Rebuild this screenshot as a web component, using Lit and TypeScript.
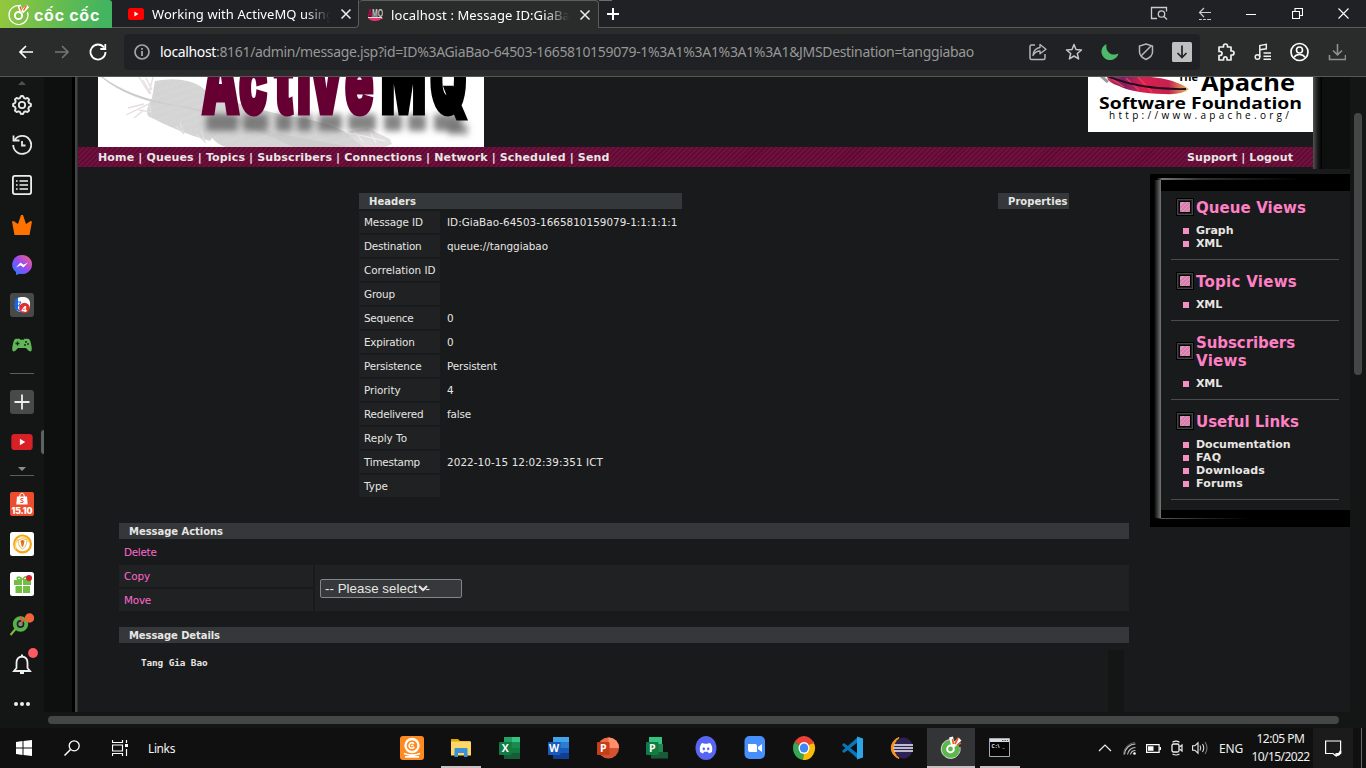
import { LitElement, html, svg, css, nothing } from "lit";
import { customElement, property } from "lit/decorators.js";

/** Inline text spread over a given advance width by adjusting its tracking. */
@customElement("fit-text")
class FitText extends LitElement {
  @property({ type: Number }) w = 0;
  @property() text = "";
  static styles = css`
    :host { display: inline-block; white-space: pre; }
    span { display: inline-block; white-space: pre; }
  `;
  firstUpdated() {
    const s = this.renderRoot.querySelector("span") as HTMLElement;
    const n = s.getBoundingClientRect().width;
    s.style.letterSpacing = `${(this.w - n) / this.text.length}px`;
  }
  render() { return html`<span>${this.text}</span>`; }
}

const fit = (text: string, w: number) => html`<fit-text .text=${text} .w=${w}></fit-text>`;
const ic = (w: number, h: number, body: unknown, vb = `0 0 ${w} ${h}`) =>
  html`<svg width=${w} height=${h} viewBox=${vb} fill="none">${body}</svg>`;

const brandMark = svg`
  <path d="M11 3.500A9.500 9.500 0 1 0 20.500 10" stroke="#fff" stroke-width="1.200"/>
  <circle cx="11.500" cy="13.500" r="3.600" stroke="#fff" stroke-width="2"/>
  <path d="M12 3l2 6M15 10l6-6" stroke="#fff" stroke-width="3.400"/>
  <path d="M13 4.500l1.500 4M16.500 8.500l3-5" stroke="#f2552c" stroke-width="1.400"/>`;
const youtube = (w: number, h: number, c: string) =>
  ic(w, h, svg`<rect width="16" height="12" rx="2.500" fill=${c}/><path d="M6.400 3.600v4.800l4-2.400z" fill="#fff"/>`, "0 0 16 12");
const close = ic(12, 12, svg`<path d="M1.500 1.500l9 9M10.500 1.500l-9 9" stroke="#eee" stroke-width="1.500"/>`);

const windowIcons = [
  ic(18, 16, svg`<path d="M7 12.500H1.500V1.500h15v4" stroke="#ccc" stroke-width="1.300"/><circle cx="11.500" cy="8" r="3.200" stroke="#ccc" stroke-width="1.300"/><path d="M14 10.500l3 3" stroke="#ccc" stroke-width="1.300"/>`),
  ic(14, 14, svg`<path d="M13 5.500H1.500M6 1L1.500 5.500 6 10M1 12.500h12" stroke="#ccc" stroke-width="1.200"/><path d="M4.500 12v1M8.500 12v1" stroke="#202124" stroke-width="1.200"/>`),
  ic(10, 10, svg`<path d="M0 5.500h10" stroke="#fff"/>`),
  ic(11, 11, svg`<path d="M.5 3.500h7v7h-7zM3 3V.5h7.500v7H8" stroke="#fff" stroke-width="1.100"/>`),
  ic(11, 11, svg`<path d="M.5.5l10 10M10.500.5l-10 10" stroke="#fff" stroke-width="1.100"/>`),
];

const addressIcons = [
  ic(18, 18, svg`<path d="M6 2H2.500Q1 2 1 3.500v11Q1 16.500 2.500 16.500h12q1.500 0 1.500-1.500v-4" stroke="#b5b7b6" stroke-width="1.500"/><path d="M11 1.500l6 4.700-6 4.600V8Q6.500 8 4 12.500 4.500 5.500 11 4.500z" stroke="#b5b7b6" stroke-width="1.400" stroke-linejoin="round"/>`),
  ic(18, 18, svg`<path d="M9 1.500l2 5.100 5.500.4-4.200 3.500 1.300 5.400L9 13l-4.600 2.900 1.300-5.400L1.500 7 7 6.600z" stroke="#c4c6c5" stroke-width="1.500" stroke-linejoin="round"/>`),
  ic(18, 18, svg`<path d="M5.500 1C-1 4-1 12 4 15.500c5 3.500 12 1 13.500-5C12 13.500 4 10 5.500 1z" fill="#4db96a"/>`),
  ic(16, 18, svg`<path d="M8 1l6.500 2v6q0 4.500-6.500 7.500Q1.500 13.500 1.500 9V3zM3 13L13 3" stroke="#b5b7b6" stroke-width="1.500"/>`),
  ic(20, 20, svg`<rect width="20" height="20" rx="1.500" fill="#c0c0c0"/><path d="M10 3.500v12M5.500 11l4.500 4.500L14.500 11" stroke="#202124" stroke-width="1.700"/>`),
];

const toolIcons = [
  ic(18, 18, svg`<path d="M2 4h4.500V3a2 2 0 0 1 4 0v1H14v4h1a2 2 0 0 1 0 4h-1v5h-4v-1.500a1.700 1.700 0 0 0-3.400 0V17H2v-4.500h1a2 2 0 0 0 0-4H2z" stroke="#f0f0f0" stroke-width="1.700" stroke-linejoin="round"/>`),
  ic(18, 18, svg`<circle cx="3.500" cy="14" r="2.300" stroke="#eee" stroke-width="1.500"/><path d="M5.800 14V2.500l6.500-1.200v4.500l-6.500 1M9.500 10H17M9.500 13.200H17M9.500 16.200H17" stroke="#eee" stroke-width="1.500"/>`),
  ic(20, 20, svg`<circle cx="9.500" cy="10" r="8.500" stroke="#fff" stroke-width="1.700"/><circle cx="9.500" cy="8" r="3" stroke="#fff" stroke-width="1.600"/><path d="M4 15.500Q5.500 12.500 9.500 12.500t5.500 3" stroke="#fff" stroke-width="1.600"/>`),
  ic(18, 18, svg`<path d="M9.500 1v10.500M5 7.500l4.500 4.300L14 7.500M1.500 12v4.500h16V12" stroke="#8e908f" stroke-width="1.600"/>`),
];

const gear = (() => {
  const p: string[] = [];
  for (let i = 0; i < 48; i++) {
    const a = (i / 48) * Math.PI * 2;
    const r = 8.1 + 1 * Math.max(-0.9, Math.min(0.9, 1.6 * Math.cos(a * 8)));
    p.push(`${(10 + r * Math.cos(a)).toFixed(2)} ${(10 + r * Math.sin(a)).toFixed(2)}`);
  }
  return `M${p.join("L")}z`;
})();

const sideTop = [
  ic(20, 20, svg`<path d=${gear} stroke="#e8e8e8" stroke-width="1.900" stroke-linejoin="round"/><circle cx="10" cy="10" r="3.200" stroke="#e8e8e8" stroke-width="1.800"/>`),
  ic(20, 20, svg`<path d="M3 4.500A9 9 0 1 1 1.200 10M1.500.5v5h6M10 6v4.500h3.500" stroke="#e8e8e8" stroke-width="1.800"/>`),
  ic(20, 20, svg`<rect x=".9" y=".9" width="18.200" height="18.200" rx="2" stroke="#eee" stroke-width="1.800"/><path d="M4 6h1.600M4 10h1.600M4 14h1.600M7.500 6H16M7.500 10H16M7.500 14H16" stroke="#eee" stroke-width="1.600"/>`),
  ic(20, 20, svg`<path d="M0 6.500l1.500-.5L6 9l3-9h2l3 9 4.500-3 1.500.5L17.500 20h-15z" fill="#ff7200"/>`),
  ic(20, 20, svg`<defs><linearGradient id="ms" x1="0" y1="1" x2="1" y2="0"><stop offset="0" stop-color="#1585ff"/><stop offset=".5" stop-color="#9a48f5"/><stop offset="1" stop-color="#ff6470"/></linearGradient></defs><path d="M10 0a10 9.500 0 1 1-2 18.800L4 20v-3A9.500 9.500 0 0 1 10 0z" fill="url(#ms)"/><path d="M4 12.500l4.500-5 3 2.300L16 7.500l-4.500 5-3-2.300z" fill="#fff"/>`),
  ic(24, 24, svg`<rect width="24" height="24" rx="3" fill="#484a49"/><rect x="5" y="4" width="15" height="15" rx="6" fill="#fff"/><path d="M6 5q-3 7 0 12l6 2.500-4-4V5z" fill="#1768e8"/><path d="M8 9h3l-2.500 4H11" stroke="#1768e8"/><circle cx="14.500" cy="15" r="5.300" fill="#df2f2f"/><text x="11.500" y="18.500" font-size="9.500" font-weight="700" fill="#fff">4</text>`),
  ic(20, 14, svg`<path d="M4 .8h3.500l1 1h3l1-1H16q2 0 3 5 1.800 7.500-.5 7.800-1.500 0-4.500-3.600H6Q3 13.600 1.500 13.600-.8 13.300 1 5.800 2 .8 4 .8z" fill="#62b559"/><path d="M3.500 5.500h4M5.500 3.500v4" stroke="#173317" stroke-width="1.300"/><circle cx="14" cy="4" r="1" fill="#173317"/><circle cx="16" cy="6" r="1" fill="#173317"/><circle cx="13" cy="7" r="1" fill="#173317"/>`),
];
const sideBottom = [
  ic(24, 24, svg`<rect width="24" height="24" rx="2" fill="#ee4d2d"/><path d="M7 4.500h10l.7 8H6.300z" fill="#fff"/><path d="M9.500 5Q10 1 12 1t2.500 4" stroke="#fff"/><text x="10" y="11.300" font-size="7" font-weight="700" fill="#ee4d2d">S</text><text x="1.500" y="21.500" font-family="Inter" font-size="8.500" font-weight="900" fill="#fff" textLength="21">15.10</text>`),
  ic(24, 24, svg`<rect width="24" height="24" rx="2.500" fill="#fff"/><circle cx="12.500" cy="12" r="8.400" stroke="#f6a51b" stroke-width="2.200"/><path d="M6 17Q4 12 8 7m2-2q6-1 9 5" stroke="#ffd75a" stroke-width="1.500"/><path d="M8 8q4.500-3 9 0-.5 7-4.500 9Q8.500 15 8 8z" stroke="#e8ba65"/><path d="M11 8.500l1.500 6 1.500-6M12.500 8v3" stroke="#df6f19" stroke-width="1.300"/>`),
  ic(24, 24, svg`<rect width="24" height="24" rx="2.500" fill="#fff"/><path d="M4 8h17v5H4zM5.500 13.500H20v7.500H5.500z" fill="#72bd44"/><path d="M12 8Q6 8 7.500 5.500 10 4 12.500 8 15 3 17.500 6q0 2-5 2" stroke="#72bd44" stroke-width="1.600"/><path d="M12.500 8v13M5 13.500h15" stroke="#fff"/><circle cx="19" cy="6" r="3" fill="#d61f2c"/>`),
  ic(24, 24, svg`<circle cx="10.500" cy="12" r="5.700" stroke="#56b34b" stroke-width="4"/><path d="M5.500 17l-5 6" stroke="#80bf38" stroke-width="2"/><circle cx="10.500" cy="12" r="3" fill="#888" stroke="#222" stroke-width="1.500"/><path d="M10.500 4l1.500 6 5-5" stroke="#e35a30" stroke-width="1.500"/><circle cx="19.500" cy="6" r="4.700" fill="#f0643a"/>`),
  ic(32, 32, svg`<path d="M8 23h16l-2.500-3v-5q0-6-5.500-6.500Q10.500 9 10.500 15v5z" stroke="#eee" stroke-width="1.800"/><path d="M15 7.500h2M14 25h4" stroke="#eee" stroke-width="2"/><circle cx="27" cy="5" r="4.900" fill="#ff5964"/>`),
  ic(16, 4, svg`<circle cx="2" cy="2" r="2" fill="#eee"/><circle cx="8" cy="2" r="2" fill="#eee"/><circle cx="14" cy="2" r="2" fill="#eee"/>`),
];

const office = (l: string, c: string, shape: unknown) =>
  ic(24, 24, svg`${shape}<rect x="1" y="6" width="12.500" height="13" rx="1" fill=${c}/><text x="7.200" y="16.300" text-anchor="middle" font-size="10.500" font-weight="700" fill="#fff">${l}</text>`);
const sheet = (c: string[]) => svg`<path d="M6 1h16v5.500H6z" fill=${c[1]}/><path d="M14 1h8v5.500h-8z" fill=${c[2]}/><path d="M6 6.500h16V12H6z" fill=${c[3]}/><path d="M6 12h16v5.500H6z" fill=${c[0]}/><path d="M6 17h16v6H6z" fill=${c[4]}/>`;
const apps: { icon: unknown; cls?: string }[] = [
  { icon: ic(24, 24, svg`<rect width="24" height="24" rx="3" fill="#ff8b20"/><circle cx="12" cy="9.500" r="6.500" stroke="#fff" stroke-width="2.400"/><path d="M14 7.700A2.800 2.800 0 1 0 14.300 11M11 9.500h2.500" stroke="#fff" stroke-width="1.500"/><path d="M4 17.500q8 3.500 16 0M5 20.800h14" stroke="#fff" stroke-width="1.800"/>`) },
  { cls: "open", icon: ic(24, 24, svg`<path d="M2 3h7l2 2h10v3H2z" fill="#e6a50a"/><path d="M2 5.500h20v14H2z" fill="#ffd766"/><path d="M5.500 21v-8q0-1 1-1h11q1 0 1 1v8h-3.500v-4H9v4z" fill="#3991d8"/>`) },
  { icon: office("X", "#107c41", sheet(["#107c41", "#21a366", "#33c481", "#18894f", "#185c37"])) },
  { icon: office("W", "#185abd", sheet(["#185abd", "#41a5ee", "#41a5ee", "#2b7cd3", "#103f91"])) },
  { icon: office("P", "#c43e1c", svg`<circle cx="12.500" cy="12" r="10.500" fill="#d35230"/><path d="M12.500 1.500A10.500 10.500 0 0 1 23 12H2A10.500 10.500 0 0 1 12.500 1.500z" fill="#ed6c47"/><path d="M12.500 1.500A10.500 10.500 0 0 1 23 12H12.500z" fill="#ff8f6b"/>`) },
  { icon: office("P", "#107c41", svg`<path d="M4 1h13v8H4z" fill="#33c481"/><path d="M8 8h10v8H8z" fill="#21874f"/><path d="M6 16h17v6.500H6z" fill="#185c37"/>`) },
  { icon: ic(24, 24, svg`<ellipse cx="12" cy="12" rx="10.500" ry="12" fill="#5865f2"/><path d="M6 16Q5 10 8 7l3 .8h2l3-.8q3 3 2 9l-3 1.500-1.200-1.700h-3.600L9 17.500z" fill="#fff"/><ellipse cx="9.800" cy="12.700" rx="1.200" ry="1.500" fill="#5865f2"/><ellipse cx="14.200" cy="12.700" rx="1.200" ry="1.500" fill="#5865f2"/>`) },
  { icon: ic(24, 24, svg`<rect x="1.500" y="0" width="20.500" height="23" rx="5" fill="#478ffc"/><path d="M5 8h7q2 0 2 2v6H7q-2 0-2-2zM15 11l4-3v8l-4-3z" fill="#fff"/>`) },
  { icon: ic(24, 24, svg`<g transform="translate(12 12) scale(1 1.090) translate(-12 -12)"><path d="M12 12L2.500 6.500A11 11 0 0 1 21.500 6.500z" fill="#ea4335"/><path d="M12 12L2.500 6.500A11 11 0 0 0 11 23z" fill="#34a853"/><path d="M12 12l9.500-5.500A11 11 0 0 1 11 23z" fill="#fbbc05"/><path d="M12 7h9.800" stroke="#ea4335" stroke-width="2"/><circle cx="12" cy="12" r="5.500" fill="#fff"/><circle cx="12" cy="12" r="4.200" fill="#4285f4"/></g>`) },
  { icon: ic(24, 24, svg`<path d="M1 9l2-2 14 11v5z" fill="#0877b9"/><path d="M1 15l2 2L17 6V1z" fill="#0877b9"/><path d="M16 .5l6 2v19l-6 2z" fill="#2ba5e8"/>`) },
  { icon: ic(24, 24, svg`<path d="M9 1.500A11 11 0 0 0 9 22.500 16 16 0 0 1 9 1.500z" fill="#f7941e" stroke="#f7941e"/><ellipse cx="13.500" cy="12" rx="9.500" ry="10.500" fill="#2c2255"/><path d="M4 9h19M3.500 12H23M4 15h19" stroke="#eee" stroke-width="1.700"/>`) },
  { cls: "active", icon: ic(24, 24, svg`<circle cx="11.500" cy="13" r="6.700" stroke="#5cb84b" stroke-width="5"/><circle cx="11.500" cy="13" r="3.400" fill="#5cb84b" stroke="#fff" stroke-width="2"/><path d="M12 1l2 8M14 10l7-7" stroke="#fff" stroke-width="4"/><path d="M13.500 3l1 5M16 8l3-6M18 9l4-2" stroke="#ec5a2c" stroke-width="1.700"/><path d="M11 3.500A9.500 9.500 0 1 0 21 11" stroke="#fff" stroke-width=".8"/>`) },
  { cls: "open", icon: ic(22, 20, svg`<path d="M.5.5h20v18H.5z" fill="#050505" stroke="#aaa"/><path d="M1 1h19v3H1z" fill="#d9dde2"/><path d="M13 2.500h6" stroke="#555" stroke-dasharray="1.500 1"/><text x="2.500" y="9.500" font-size="5" font-weight="700" fill="#eee" textLength="13">C:\\ _</text>`) },
];

const tray = [
  { w: 30, i: ic(14, 8, svg`<path d="M1 7l6-6 6 6" stroke="#eee" stroke-width="1.200"/>`) },
  { w: 20, i: ic(14, 13, svg`<path d="M1.500 12.500A11 11 0 0 1 12.500 2M4.500 12.500a8 8 0 0 1 8-7M7.500 12.500a5 5 0 0 1 5-4" stroke="#bbb" stroke-width="1.200"/><path d="M.5 12.500A12 12 0 0 1 12 .5" stroke="#777" stroke-width=".8"/><circle cx="11.500" cy="11.500" r="1.300" fill="#fff"/>`) },
  { w: 26, i: ic(15, 9, svg`<path d="M.6.6h12.500v7.800H.6z" stroke="#fff" stroke-width="1.200"/><path d="M2 2.300h5.500v4.500H2zM13.500 3H15v3h-1.500z" fill="#fff"/>`) },
  { w: 22, i: ic(12, 16, svg`<rect x="1" y="4" width="7" height="8" rx="1.500" stroke="#eee" stroke-width="1.300"/><path d="M8.500 7L11 5v6L8.500 9M1.500 2.200Q5 0 8.500 2.200M1.500 14q3.500 2 7 0" stroke="#eee" stroke-width="1.200"/>`) },
  { w: 24, i: ic(16, 14, svg`<path d="M.6 4.800h2.200L6 1.800v10.400L2.800 9.200H.6z" stroke="#eee" stroke-width="1.100"/><path d="M8 4.500q1.500 2.500 0 5M10.500 3q2.500 4 0 8" stroke="#ddd" stroke-width="1.100"/><path d="M13 1q4 6 0 12" stroke="#777" stroke-width="1.100"/>`) },
];

const headerRows: [string, string, number, number][] = [
  ["Message ID", "ID:GiaBao-64503-1665810159079-1:1:1:1:1", 59, 230.5],
  ["Destination", "queue://tanggiabao", 57.5, 101],
  ["Correlation ID", "", 71.5, 0],
  ["Group", "", 31, 0],
  ["Sequence", "0", 49.5, 7],
  ["Expiration", "0", 50.5, 7],
  ["Persistence", "Persistent", 57.5, 50],
  ["Priority", "4", 36.5, 7],
  ["Redelivered", "false", 59.5, 24],
  ["Reply To", "", 43, 0],
  ["Timestamp", "2022-10-15 12:02:39:351 ICT", 56, 156],
  ["Type", "", 24, 0],
];

const views: { title: [string, number][]; links: [string, number][] }[] = [
  { title: [["Queue Views", 110]], links: [["Graph", 37.5], ["XML", 26]] },
  { title: [["Topic Views", 101]], links: [["XML", 26]] },
  { title: [["Subscribers", 99], ["Views", 51]], links: [["XML", 26]] },
  { title: [["Useful Links", 103]], links: [["Documentation", 94.5], ["FAQ", 25.5], ["Downloads", 69], ["Forums", 47]] },
];

// Feet of the wordmark's letters, blurred into a shadow: [x, width]
const feet = [[206, 32], [243, 25], [276, 16], [297, 15], [318, 24], [348, 28], [384, 18], [408, 18], [434, 28]];

// The wordmark is set condensed: letter positions are in page pixels
const squeeze = 0.51;
const at = (xs: number[]) => xs.map((x) => (x / squeeze).toFixed(1)).join(" ");

const mqLogo = html`<svg class="block" width="386" height="70" viewBox="98 77 386 70">
  <defs>
    <filter id="soft" x="-10%" y="-60%" width="120%" height="220%"><feGaussianBlur stdDeviation="3.200"/></filter>
    <pattern id="barb" width="3" height="7" patternUnits="userSpaceOnUse" patternTransform="rotate(-18)"><rect width="3" height="7" fill="#d4d4d4"/><rect width="1" height="3" fill="#dad9d9"/></pattern>
  </defs>
  <rect x="98" y="77" width="386" height="70" fill="#fff"/>
  <path d="M155 81q28-5 45 5l10 8q40 14 78 22 54 7 80 31H226q-8-2-14-9l-2 3q-30-8-62-25-3-6 4-18z" fill="url(#barb)"/>
  <path d="M103 77q25 19 72 28 55 8 100 28l75 14h-56q-70-32-118-41-46-5-75-29z" fill="#cdcdcd"/>
  <path d="M139 77l10 16 4-16M143 80l8 14M146 78l6 12M126 115l23-11 2 8-12-2M128 108l16-4M134 118l10-8M176 126l8 8-4-12M196 134l9 8-4-12" stroke="#e4dee0" stroke-width="1.300" fill="none"/>
  <path d="M345 132l22-4 23 11 2 5-9 4-20-1z" fill="#e2dfe0"/><path d="M345 132q24 5 40 9m-32-12l10 13m6-13l7 14" stroke="#f8f6f6" fill="none"/>
  <g filter="url(#soft)" fill="#666">
    ${feet.map(([x, w]) => svg`<rect x=${x} y="114" width=${w} height="17" rx="3" opacity=".8"/>`)}
    <rect x="448" y="124" width="20" height="11" opacity=".6"/>
  </g>
  <g transform=${`scale(${squeeze} 1)`} font-family="Inter" font-weight="900" font-size="92" stroke-width="5">
    <text x=${at([202, 239, 274.5, 297, 311.5, 345])} y="113" fill="#660033" stroke="#660033">Active</text>
    <text x=${at([381, 430])} y="113" fill="#000" stroke="#000">MQ</text>
  </g>
</svg>`;

const asfLogo = html`<svg class="block" width="225" height="55" viewBox="1088 77 225 55" font-family="DejaVu Sans, sans-serif">
  <defs><linearGradient id="plume"><stop offset="0" stop-color="#cf3650"/><stop offset=".2" stop-color="#7a2064"/><stop offset=".45" stop-color="#d9204c"/><stop offset=".75" stop-color="#c5204f"/><stop offset="1" stop-color="#e2c45b"/></linearGradient></defs>
  <rect x="1088" y="77" width="225" height="55" fill="#fff"/>
  <path d="M1107 77h44q24 2 38 12-6 6-25 5-31-1-45-8-11-3-12-9z" fill="url(#plume)"/>
  <path d="M1112 79l12 8M1126 78l13 12M1138 77l14 15" stroke="#ef385a" stroke-width="1.500"/>
  <path d="M1107 76q34 14 79 13" stroke="#210921" stroke-width="1.800" fill="none"/>
  <path d="M1101 76l7 6" stroke="#999" stroke-width="3"/>
  <text x="1178" y="81" font-size="11" font-weight="700" textLength="20">The</text>
  <text x="1201" y="90.500" font-size="24" font-weight="700" textLength="94" lengthAdjust="spacingAndGlyphs">Apache</text>
  <text x="1099" y="109" font-size="16.500" font-weight="700" textLength="203" lengthAdjust="spacingAndGlyphs">Software Foundation</text>
  <text x="1109" y="119" font-size="10" textLength="180">http://www.apache.org/</text>
</svg>`;

@customElement("app-root")
class AppRoot extends LitElement {
  static styles = css`
    :host { display: flex; flex-direction: column; width: 1366px; height: 768px; overflow: hidden; background: #141615; color: #fff; font-family: "Noto Sans", "Open Sans", sans-serif; font-size: 13px; }
    * { box-sizing: border-box; }
    svg { flex: none; font-family: "Open Sans", sans-serif; }
    .block { display: block; }
    .row, .cell { display: flex; align-items: center; }
    .cell { justify-content: center; flex: none; }

    .tabs { display: flex; height: 28px; background: #202124; flex: none; }
    .brand { width: 112px; height: 28px; display: flex; align-items: center; gap: 3px; padding-left: 7px; background: linear-gradient(100deg, #94c83d, #43b45f 90%); border-top-right-radius: 3px; font: 700 16px/20px "Inter"; }
    .brand fit-text { padding-top: 2px; }
    .tab { display: flex; align-items: center; height: 28px; border-bottom: 1px solid #5b5d5c; }
    .tab1 { width: 247px; padding-left: 16px; border-right: 1px solid #5b5d5c; border-bottom-right-radius: 4px; }
    .tab2 { width: 240px; padding-left: 8px; background: #2a2c2b; border: 1px solid #5b5d5c; border-width: 1px 1px 0 0; border-radius: 4px 4px 0 0; }
    .name { width: 180px; margin-left: 8px; overflow: hidden; line-height: 20px; -webkit-mask-image: linear-gradient(90deg, #000 85%, transparent 99%); mask-image: linear-gradient(90deg, #000 85%, transparent 99%); }
    .tab .x { margin-left: 8px; display: flex; }
    .rest { flex: 1; display: flex; border-bottom: 1px solid #5b5d5c; padding-left: 8px; background: linear-gradient(#77696b, #77696b) 0 0 / 13px 1px no-repeat; }
    .rest .wins { margin-left: auto; display: flex; }
    .wins .cell { width: 46px; height: 27px; }

    .toolbar { height: 49px; flex: none; display: flex; align-items: center; background: #2a2c2b; border-bottom: 1px solid #565857; padding-bottom: 1px; }
    .navs { display: flex; width: 124px; padding-left: 8px; }
    .navs .cell { width: 36px; }
    .address { width: 1076px; height: 36px; background: #202124; border-radius: 4px; display: flex; align-items: center; padding-left: 10px; }
    .url { margin-left: 10px; width: 860px; font-size: 14px; line-height: 20px; color: #969897; }
    .url b { font-weight: 400; color: #fff; }
    .address .cell { width: 36px; }
    .tools { display: flex; padding-left: 7px; }
    .tools .cell { width: 37px; }

    .middle { display: flex; height: 651px; flex: none; }
    .side { width: 44px; flex: none; background: #141615; display: flex; flex-direction: column; align-items: center; position: relative; }
    .side .cell { height: 40px; width: 44px; }
    .tri { height: 8px; width: 8px; display: flex; align-items: end; }
    .sel { position: absolute; left: 41px; top: 353px; width: 3px; height: 24px; background: #606261; border-radius: 3px 0 0 3px; }
    .view { width: 1322px; display: flex; flex-direction: column; }
    .pane { display: flex; height: 635px; }
    .edge { width: 34px; background: linear-gradient(90deg, #0e100f 0 28px, #000 28px 31px, #444 31px 33px, #303133 33px); flex: none; }
    .page { width: 1272px; height: 635px; overflow: hidden; background: #191a1c; font-family: "DejaVu Sans", Verdana, sans-serif; font-size: 10.400px; color: #e8e6e3; }
    .vbar { width: 16px; padding: 36px 4px 0; }
    .vbar div { height: 262px; border-radius: 4px; background: #454746; }
    .hbar { height: 16px; padding: 4px 27px 4px 4px; }
    .hbar div { height: 8px; border-radius: 4px; background: #454746; }

    .top { display: flex; height: 92px; }
    .mast { width: 1235px; }
    .logos { display: flex; height: 70px; justify-content: space-between; padding-left: 20px; }
    .menu { height: 20px; display: flex; align-items: center; justify-content: space-between; padding: 0 20px; font-weight: 700; font-size: 11px; background: repeating-linear-gradient(135deg, #70103f 0 2px, #5e0a33 2px 3.500px); }
    .shadow { width: 9px; background: linear-gradient(90deg, #515151, #1d1d1d 50%, #000); }
    .dark { width: 28px; background: #0e100f; }
    .lower { display: flex; }
    .main { width: 1072px; padding: 24px 21px 0 41px; }
    .tables { display: flex; padding-left: 240px; height: 330px; align-items: start; }
    .bar { height: 16px; background: #34383a; font-weight: 700; font-size: 10px; padding-left: 10px; display: flex; align-items: center; }
    .headers { width: 323px; margin-right: 316px; display: flex; flex-direction: column; gap: 2px; }
    .hrow { display: flex; align-items: center; gap: 7px; height: 22px; }
    .lab { width: 81px; height: 22px; background: #1f2122; display: flex; align-items: center; padding-left: 5px; }
    .props { width: 71px; }
    .actions { display: grid; grid-template-columns: 194px 814px; grid-template-rows: 22px 22px 22px; gap: 2px; margin: 2px 0 16px; color: #ff68cf; }
    .act { display: flex; align-items: center; padding-left: 5px; grid-column: 1; }
    .act.bg { background: #1f2122; }
    .pick { grid-column: 2; grid-row: 2 / 4; background: #1f2122; padding: 14px 5px; }
    .select { width: 142px; height: 19px; border: 1px solid #858585; border-radius: 2px; background: #36393b; color: #e8e6e3; font: 13.300px/17px "Liberation Sans", Arial; padding-left: 4px; display: flex; align-items: center; }
    .select svg { margin-left: -12px; }
    .details { display: flex; justify-content: space-between; padding: 7px 5px 0 22px; height: 80px; }
    .mono { font: 700 9.400px/12px "DejaVu Sans Mono"; padding-top: 7px; }
    .track { width: 16px; background: #141615; }

    .panel { width: 200px; height: 353px; margin-top: 5px; padding: 6px 0 10px 11px; background: linear-gradient(90deg, transparent 7px, #777 12px, #333 50px, #000 150px) 0 4px / 200px 2px no-repeat, linear-gradient(90deg, transparent 7px, #555 12px, #222 60px, #000 100px) 0 344px / 200px 1px no-repeat, linear-gradient(90deg, #000 4px, #333 7px, #777 11px) 0 6px / 11px 338px no-repeat, #000; }
    .inner { background: #000; padding: 11px 0 8px; border-radius: 3px 0 0 3px; }
    .fill { background: #191a1c; height: 319px; padding: 0 11px 0 10px; }
    .sec { padding: 12px 0 9px; border-bottom: 1px solid #494b4c; }
    .sec.first { padding-top: 7px; }
    .head { display: flex; align-items: center; gap: 2px; padding-left: 5px; color: #ff80c5; font: 700 15px/18px "DejaVu Sans"; margin-bottom: 8px; }
    .sq { width: 18px; height: 18px; flex: none; border: 1px solid #000; background: #000; box-shadow: inset 0 0 0 1px #444, inset 0 0 0 2px #222; padding: 3px; }
    .sq div { height: 10px; background: repeating-linear-gradient(135deg, #d67fae 0 2px, #e29abf 2px 3px); }
    .lines { display: flex; flex-direction: column; align-items: start; padding-top: 1px; margin-bottom: -1px; }
    .link { display: flex; align-items: center; gap: 7px; padding-left: 12px; height: 13px; font-weight: 700; font-size: 11px; line-height: 13px; }
    .link i { width: 6px; height: 6px; background: #f48fc4; margin-top: 1px; }

    .taskbar { height: 40px; display: flex; background: #101010; flex: none; font-size: 12px; color: #f0f0f0; }
    .taskbar .cell { height: 40px; width: 48px; }
    .links { width: 243px; padding-left: 4px; display: flex; align-items: center; }
    .apps { display: flex; }
    .apps .app { width: 48px; margin-left: 1px; height: 40px; position: relative; }
    .apps .active { background: #333435; }
    .open::after, .active::after { content: ""; position: absolute; bottom: 0; left: 4px; right: 4px; height: 2px; background: #c9bfc0; }
    .active::after { left: 0; right: 0; }
    .tray { display: flex; margin-left: auto; }
    .clock { width: 63px; margin: 0 1px 0 6px; text-align: center; line-height: 18px; padding-top: 2px; }
    .note { background: #1b1b1b; width: 40px !important; }
    .show { width: 13px; padding-left: 8px; }
    .show div { width: 1px; height: 40px; background: #6a6a6a; }
    .eng { display: flex; align-items: center; margin-left: 7px; }
  `;

  renderTabs() {
    return html`<div class="tabs">
      <div class="brand">${ic(24, 24, brandMark)}${fit("cốc cốc", 66)}</div>
      <div class="tab tab1">${youtube(16, 12, "#f00")}<div class="name">${fit("Working with ActiveMQ using", 182)}</div><span class="x">${close}</span></div>
      <div class="tab tab2">${ic(16, 16, svg`<defs><linearGradient id="amq"><stop offset=".33" stop-color="#c00048"/><stop offset=".34" stop-color="#c8c8c8"/></linearGradient></defs><text x="0" y="10" font-family="Liberation Sans" font-size="11" font-weight="700" fill="url(#amq)" textLength="16" lengthAdjust="spacingAndGlyphs">AMQ</text><path d="M1 11h14q-2 3-7 3T1 11z" fill="#e5367a"/><path d="M1 10.500h14" stroke="#ddd"/>`)}<div class="name">${fit("localhost : Message ID:GiaBao", 187)}</div><span class="x">${close}</span></div>
      <div class="rest">
        <div class="row">${ic(12, 12, svg`<path d="M6 0v12M0 6h12" stroke="#fff" stroke-width="2"/>`)}</div>
        <div class="wins">${windowIcons.map((i) => html`<div class="cell">${i}</div>`)}</div>
      </div>
    </div>`;
  }

  renderToolbar() {
    return html`<div class="toolbar">
      <div class="navs">
        <div class="cell">${ic(14, 14, svg`<path d="M14 7H1M7 1L1 7l6 6" stroke="#fff" stroke-width="1.600"/>`)}</div>
        <div class="cell">${ic(14, 14, svg`<path d="M0 7h13M7 1l6 6-6 6" stroke="#737574" stroke-width="1.600"/>`)}</div>
        <div class="cell">${ic(18, 18, svg`<path d="M15 4.500A7.500 7.500 0 1 0 16.500 9M16.300 1v5h-5" stroke="#fff" stroke-width="1.800"/>`)}</div>
      </div>
      <div class="address">
        ${ic(16, 16, svg`<circle cx="8" cy="8" r="7" stroke="#a3a5a4" stroke-width="1.700"/><path d="M8 7v5M8 4v1.800" stroke="#a3a5a4" stroke-width="1.800"/>`)}
        <div class="url"><b>${fit("localhost", 56)}</b>${fit(":8161/admin/message.jsp?id=ID%3AGiaBao-64503-1665810159079-1%3A1%3A1%3A1%3A1&JMSDestination=tanggiabao", 758)}</div>
        ${addressIcons.map((i) => html`<div class="cell">${i}</div>`)}
      </div>
      <div class="tools">${toolIcons.map((i) => html`<div class="cell">${i}</div>`)}</div>
    </div>`;
  }

  renderSide() {
    return html`<div class="side">
      <div class="tri">${ic(8, 4, svg`<path d="M0 4l4-4 4 4z" fill="#4e504f"/>`)}</div>
      ${sideTop.map((i) => html`<div class="cell">${i}</div>`)}
      ${ic(24, 17, svg`<path d="M0 8.500h24" stroke="#5b5d5c"/>`)}
      ${ic(24, 40, svg`<rect y="8" width="24" height="24" rx="3" fill="#484a49"/><path d="M12 12.500v15M4.500 20h15" stroke="#eee" stroke-width="1.800"/>`)}
      <div class="cell">${youtube(22, 16, "#d82127")}</div>
      ${ic(24, 22, svg`<path d="M8 5h8l-4 4z" fill="#8c8e8d"/><path d="M0 13.500h24" stroke="#5b5d5c"/>`)}
      ${sideBottom.map((i) => html`<div class="cell">${i}</div>`)}
      <div class="sel"></div>
    </div>`;
  }

  renderPage() {
    return html`<div class="page">
      <div class="top">
        <div class="mast">
          <div class="logos">${mqLogo}${asfLogo}</div>
          <div class="menu">${fit("Home | Queues | Topics | Subscribers | Connections | Network | Scheduled | Send", 511.5)}${fit("Support | Logout", 106)}</div>
        </div>
        <div class="shadow"></div><div class="dark"></div>
      </div>
      <div class="lower">
        <div class="main">
          <div class="tables">
            <div class="headers">
              <div class="bar">${fit("Headers", 47)}</div>
              ${headerRows.map(([k, v, kw, vw]) => html`<div class="hrow"><div class="lab">${fit(k, kw)}</div>${v ? fit(v, vw) : nothing}</div>`)}
            </div>
            <div class="bar props">${fit("Properties", 59.5)}</div>
          </div>
          <div class="bar">${fit("Message Actions", 94)}</div>
          <div class="actions">
            <div class="act">${fit("Delete", 32.5)}</div>
            <div class="act bg">${fit("Copy", 26)}</div>
            <div class="act bg">${fit("Move", 27)}</div>
            <div class="pick"><div class="select">${fit("-- Please select --", 105)}${ic(10, 7, svg`<path d="M1 1l4 4 4-4" stroke="#e8e6e3" stroke-width="2"/>`)}</div></div>
          </div>
          <div class="bar">${fit("Message Details", 91)}</div>
          <div class="details"><div class="mono">${fit("Tang Gia Bao", 66.5)}</div><div class="track"></div></div>
        </div>
        <div class="panel"><div class="inner"><div class="fill">
          ${views.map((v, i) => html`<div class="sec ${i ? "" : "first"}">
            <div class="head"><div class="sq"><div></div></div><div class="lines">${v.title.map(([t, w]) => fit(t, w))}</div></div>
            ${v.links.map(([t, w]) => html`<div class="link"><i></i>${fit(t, w)}</div>`)}
          </div>`)}
        </div></div></div>
      </div>
    </div>`;
  }

  renderTaskbar() {
    return html`<div class="taskbar">
      <div class="cell">${ic(16, 16, svg`<path d="M0 2l6.500-.9v6.400H0zM7.500 1L16 0v7.500H7.500zM0 8.500h6.500v6.400L0 14zM7.500 8.500H16V16l-8.500-1z" fill="#fff"/>`)}</div>
      <div class="cell">${ic(16, 16, svg`<circle cx="10.200" cy="5.800" r="5" stroke="#fff" stroke-width="1.300"/><path d="M6.500 9.500L.5 15.500" stroke="#fff" stroke-width="1.500"/>`)}</div>
      <div class="cell">${ic(16, 16, svg`<path d="M.5 0v2.500h10V0M.5 16v-2.500h10V16M.5 5h10v6H.5zM14.500 0v3M14.500 9v7" stroke="#fff" stroke-width="1.200"/><path d="M13 4h3v3h-3z" fill="#fff"/>`)}</div>
      <div class="links">${fit("Links", 27)}</div>
      <div class="apps">${apps.map((a) => html`<div class="cell app ${a.cls ?? ""}">${a.icon}</div>`)}</div>
      <div class="tray">
        ${tray.map((t) => html`<div class="cell" style="width:${t.w}px">${t.i}</div>`)}
        <div class="eng">${fit("ENG", 24)}</div>
        <div class="clock">${fit("12:05 PM", 48)}<br />${fit("10/15/2022", 58)}</div>
        <div class="cell note">${ic(17, 17, svg`<path d="M.6 1h15v12.500h-4.500V16L8 13.500H.6z" stroke="#fff" stroke-width="1.200"/><path d="M15.500 9q2.500 5-2.500 7H9q5-2 6.500-7z" fill="#fff"/>`)}</div>
        <div class="show"><div></div></div>
      </div>
    </div>`;
  }

  render() {
    return html`${this.renderTabs()}${this.renderToolbar()}
      <div class="middle">
        ${this.renderSide()}
        <div class="view">
          <div class="pane"><div class="edge"></div>${this.renderPage()}<div class="vbar"><div></div></div></div>
          <div class="hbar"><div></div></div>
        </div>
      </div>
      ${this.renderTaskbar()}`;
  }
}
